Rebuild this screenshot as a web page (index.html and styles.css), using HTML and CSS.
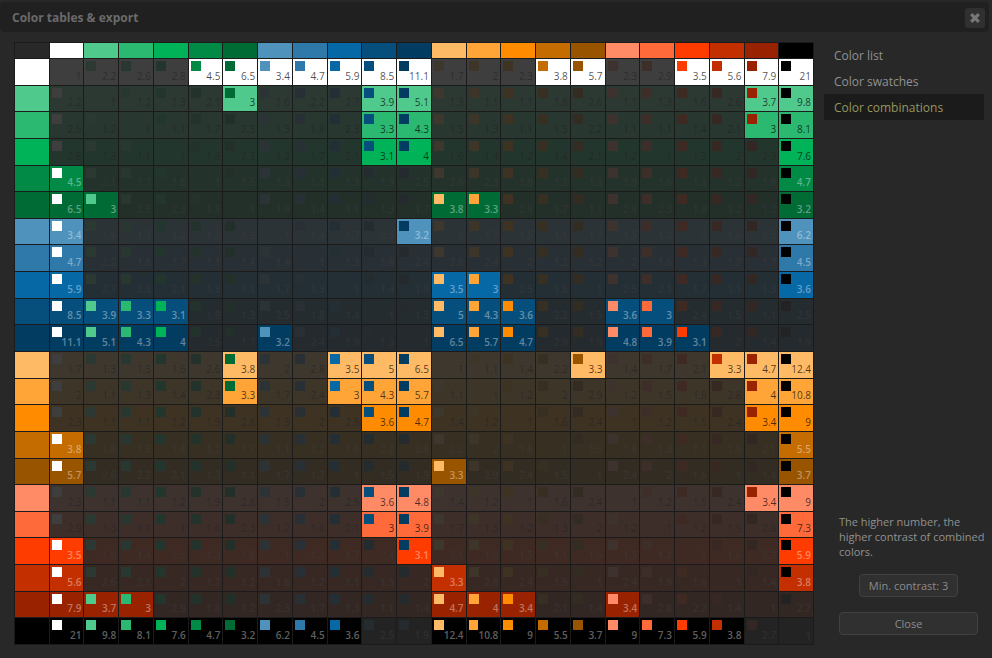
FILE: index.html
```html
<!DOCTYPE html>
<html lang="en">
<head>
<meta charset="utf-8">
<title>Color tables &amp; export</title>
<link rel="stylesheet" href="styles.css">
</head>
<body>
<header class="titlebar">
  <h1 class="title">Color tables &amp; export</h1>
  <button class="dismiss" type="button" aria-label="Close window">
    <svg width="12" height="12" viewBox="0 0 12 12" aria-hidden="true"><path d="M2.2 2.2 9.8 9.8M9.8 2.2 2.2 9.8" fill="none" stroke="currentColor" stroke-width="3.2"/></svg>
  </button>
</header>
<main class="content">
  <table class="matrix" aria-label="Color combinations">
    <thead id="matrix-head"></thead>
    <tbody id="matrix-body"></tbody>
  </table>
  <aside class="sidebar">
    <nav class="views">
      <a class="view" href="#list">Color list</a>
      <a class="view" href="#swatches">Color swatches</a>
      <a class="view view-active" href="#combinations" aria-current="page">Color combinations</a>
    </nav>
    <div class="actions">
      <p class="hint">The higher number, the<br>higher contrast of combined<br>colors.</p>
      <button class="button button-small" type="button">Min. contrast: 3</button>
      <button class="button" type="button">Close</button>
    </div>
  </aside>
</main>
<script src="matrix.js"></script>
</body>
</html>
```
FILE: styles.css
```css
* {
  box-sizing: border-box;
}

body {
  margin: 0;
  min-height: 100vh;
  display: flex;
  flex-direction: column;
  padding-top: 2px;
  background: #282828;
  color: #919191;
  font-family: "Open Sans", "Noto Sans", sans-serif;
  font-size: 12px;
}

.titlebar {
  display: flex;
  align-items: center;
  justify-content: space-between;
  height: 30px;
  margin-right: 3px;
  padding: 1px 4px 0 12px;
  border-radius: 4px;
  background: #202020;
}

.title {
  margin: 0;
  font-size: 12px;
  line-height: 16px;
  font-weight: 700;
  color: #6a6a6a;
}

.dismiss {
  display: flex;
  align-items: center;
  justify-content: center;
  width: 20px;
  height: 20px;
  padding: 0;
  border: 0;
  border-radius: 3px;
  background: #303030;
  color: #777;
}

.content {
  flex: 1;
  display: flex;
  gap: 10px;
  padding: 10px 8px 13px 14px;
}

.matrix {
  flex: 1;
  display: grid;
  grid-template-columns: repeat(23, minmax(0, 1fr));
  grid-template-rows: 15px repeat(22, minmax(0, 1fr));
  gap: 1px;
  padding: 1px;
  background: #1b1b1b;
}

.matrix thead,
.matrix tbody,
.matrix tr {
  display: contents;
}

.matrix th,
.matrix td {
  display: block;
  padding: 0;
  background: #282828;
}

.pair {
  display: flex;
  justify-content: space-between;
  height: 100%;
  padding: 2px 2px 3px;
  font-size: 10px;
  line-height: 12px;
}

.pair-low {
  opacity: 0.1;
}

.on-light {
  color: rgba(0, 0, 0, 0.7);
}

.on-dark {
  font-weight: 600;
  color: rgba(255, 255, 255, 0.38);
}

.chip {
  width: 10px;
  height: 10px;
}

.ratio {
  align-self: flex-end;
}

.sidebar {
  display: flex;
  flex-direction: column;
  justify-content: space-between;
  width: 160px;
}

.views {
  display: flex;
  flex-direction: column;
}

.view {
  padding: 2px 10px 0;
  line-height: 24px;
  color: inherit;
  text-decoration: none;
}

.view-active {
  background: #1b1b1b;
  color: #96965f;
}

.actions {
  display: flex;
  flex-direction: column;
  align-items: center;
  gap: 15px;
  padding: 0 6px 10px 15px;
}

.hint {
  align-self: flex-start;
  margin: 0;
  font-size: 11px;
  line-height: 15px;
  white-space: nowrap;
}

.button {
  width: 100%;
  height: 23px;
  padding: 0 9px;
  border: 1px solid #414141;
  border-radius: 4px;
  background: #303030;
  color: #8c8c8c;
  font: inherit;
  font-size: 11px;
}

.button-small {
  width: auto;
}
```
FILE: matrix.js
```javascript
const colors = [
  "#ffffff",
  "#4fc98c", "#2bb871", "#00b359", "#008a45", "#006b35",
  "#4f93bd", "#2e79aa", "#0768a6", "#064f7c", "#033c61",
  "#ffba66", "#ffa538", "#ff8c00", "#c46c00", "#995400",
  "#ff8b66", "#ff6a3b", "#ff3c00", "#c42f00", "#992300",
  "#000000"
];

const lightColors = new Set([0, 1, 2, 3, 11, 12, 13, 16, 17]);
const minContrast = 3;

// Upper triangle of the symmetric contrast matrix; each row starts at its diagonal.
const ratios = [
  "1 2.2 2.6 2.8 4.5 6.5 3.4 4.7 5.9 8.5 11.1 1.7 2 2.3 3.8 5.7 2.3 2.9 3.5 5.6 7.9 21",
  "1 1.2 1.3 2.1 3 1.6 2.2 2.7 3.9 5.1 1.3 1.1 1.1 1.8 2.6 1.1 1.3 1.6 2.6 3.7 9.8",
  "1 1.1 1.7 2.5 1.3 1.8 2.3 3.3 4.3 1.5 1.3 1.1 1.5 2.2 1.1 1.1 1.4 2.1 3 8.1",
  "1 1.6 2.3 1.2 1.7 2.1 3.1 4 1.6 1.4 1.2 1.4 2.1 1.2 1 1.3 2 2.9 7.6",
  "1 1.5 1.3 1.1 1.3 1.9 2.5 2.6 2.3 1.9 1.2 1.3 1.9 1.6 1.3 1.2 1.8 4.7",
  "1 1.9 1.4 1.1 1.3 1.7 3.8 3.3 2.8 1.7 1.1 2.8 2.3 1.8 1.2 1.2 3.2",
  "1 1.4 1.7 2.5 3.2 2 1.7 1.5 1.1 1.7 1.5 1.2 1 1.6 2.3 6.2",
  "1 1.3 1.8 2.4 2.8 2.4 2 1.2 1.2 2 1.6 1.3 1.2 1.7 4.5",
  "1 1.4 1.9 3.5 3 2.5 1.6 1 2.5 2.1 1.7 1.1 1.3 3.6",
  "1 1.3 5 4.3 3.6 2.2 1.5 3.6 3 2.4 1.5 1.1 2.5",
  "1 6.5 5.7 4.7 2.9 1.9 4.8 3.9 3.1 2 1.4 1.9",
  "1 1.1 1.4 2.2 3.3 1.4 1.7 2.1 3.3 4.7 12.4",
  "1 1.2 2 2.9 1.2 1.5 1.8 2.8 4 10.8",
  "1 1.6 2.4 1 1.2 1.5 2.4 3.4 9",
  "1 1.5 1.6 1.3 1.1 1.5 2.1 5.5",
  "1 2.4 2 1.6 1 1.4 3.7",
  "1 1.2 1.5 2.4 3.4 9",
  "1 1.2 1.9 2.8 7.3",
  "1 1.6 2.2 5.9",
  "1 1.4 3.8",
  "1 2.7",
  "1"
].map(row => row.split(" "));

const ratio = (a, b) => ratios[Math.min(a, b)][Math.abs(a - b)];

const heading = (color, scope) =>
  `<th scope="${scope}" aria-label="${color}" style="background:${color}"></th>`;

const cell = (row, column) => {
  const value = ratio(row, column);
  const tone = lightColors.has(row) ? "on-light" : "on-dark";
  const low = Number(value) < minContrast ? " pair-low" : "";
  return `<td><div class="pair ${tone}${low}" style="background:${colors[row]}">` +
    `<span class="chip" style="background:${colors[column]}"></span>` +
    `<span class="ratio">${value}</span></div></td>`;
};

document.getElementById("matrix-head").innerHTML =
  `<tr><td></td>${colors.map(color => heading(color, "col")).join("")}</tr>`;

document.getElementById("matrix-body").innerHTML = colors
  .map((color, row) =>
    `<tr>${heading(color, "row")}${colors.map((_, column) => cell(row, column)).join("")}</tr>`)
  .join("");
```
